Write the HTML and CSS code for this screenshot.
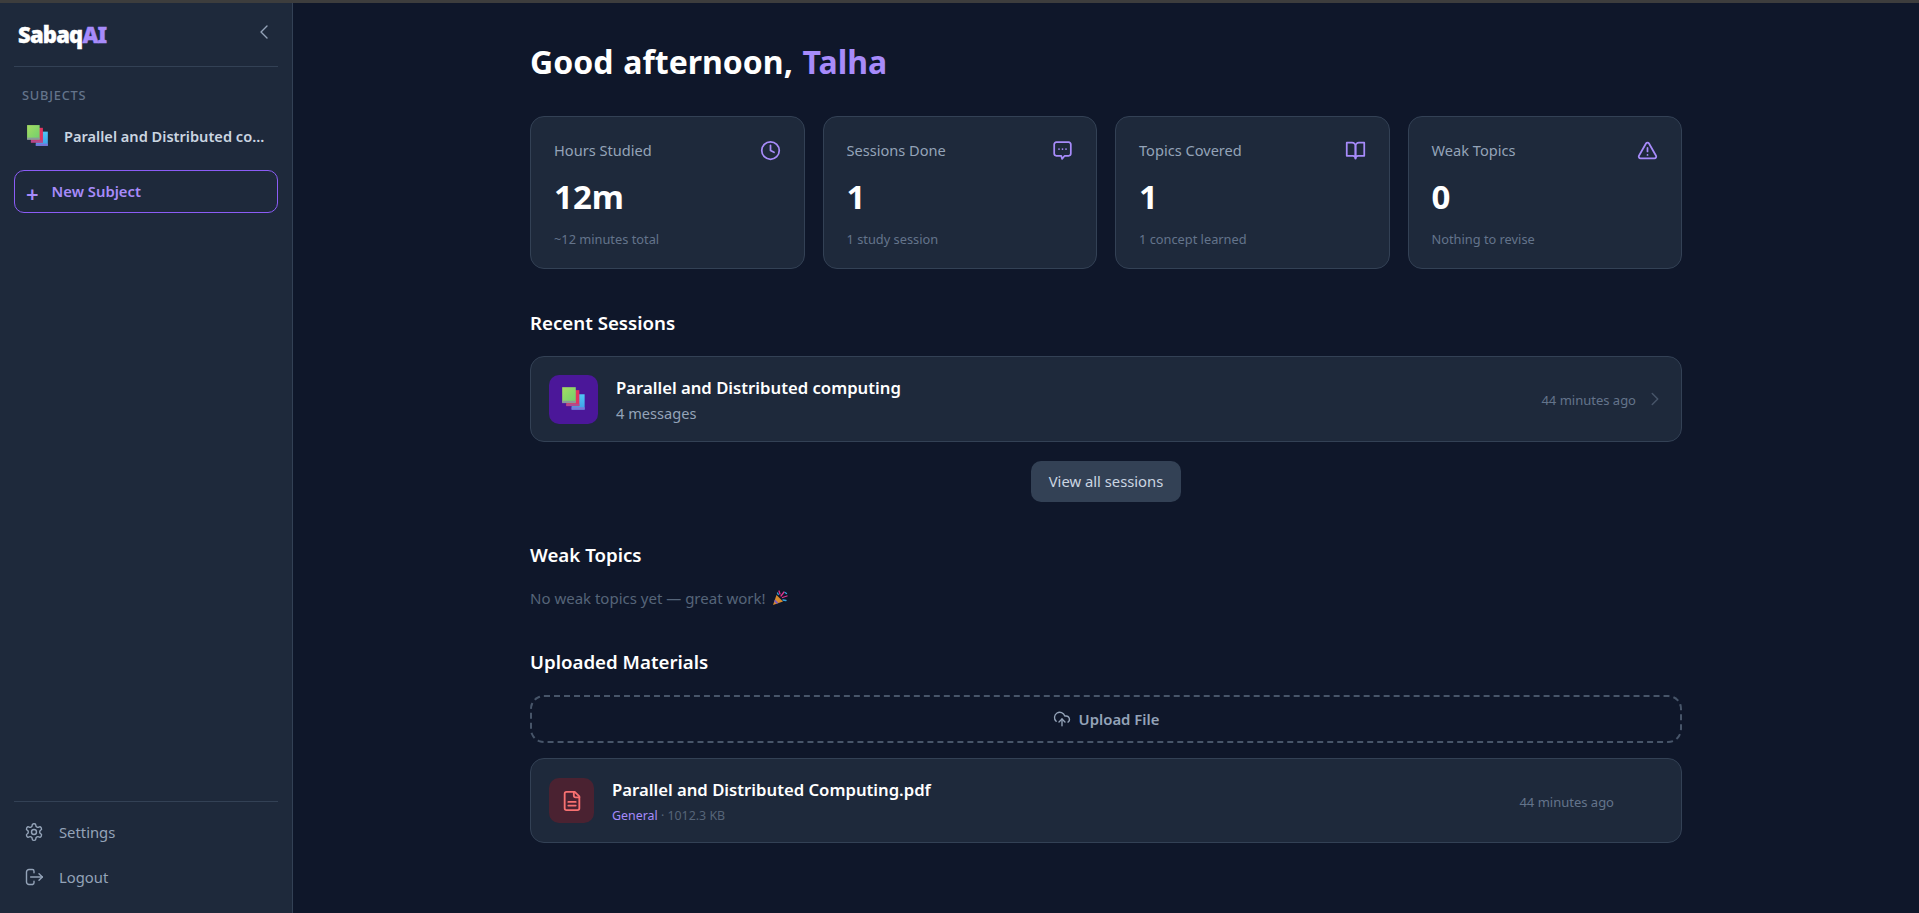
FILE: index.html
```html
<!DOCTYPE html>
<html lang="en">
<head>
    <meta charset="UTF-8">
    <meta name="viewport" content="width=device-width, initial-scale=1.0">
    <title>SabaqAI - Dashboard</title>
    <link rel="stylesheet" href="styles.css">
</head>
<body>
    <svg class="defs" width="0" height="0" aria-hidden="true">
        <defs>
            <linearGradient id="book-green" x1="0" y1="0" x2="1" y2="1">
                <stop offset="0" stop-color="#a6dc62"/>
                <stop offset="1" stop-color="#6fd06e"/>
            </linearGradient>
            <linearGradient id="book-blue" x1="0" y1="0" x2="0" y2="1">
                <stop offset="0" stop-color="#4fc6f5"/>
                <stop offset="1" stop-color="#3f9fe8"/>
            </linearGradient>
        </defs>
        <symbol id="books" viewBox="0 0 22 22">
            <rect x="9" y="7" width="11" height="13" fill="url(#book-blue)"/>
            <rect x="9" y="18" width="11" height="2" fill="#7a74d8"/>
            <rect x="4.5" y="3.5" width="11" height="13.5" fill="#e0345f"/>
            <rect x="4.5" y="15" width="11" height="2" fill="#b04a90"/>
            <rect x="1" y="1" width="11.5" height="13" fill="url(#book-green)"/>
            <rect x="1" y="12.5" width="11.5" height="2" fill="#8a9a9a"/>
        </symbol>
    </svg>

    <div class="topbar"></div>

    <div class="app">
        <aside class="sidebar">
            <div class="brand">
                <span class="logo">Sabaq<span class="accent">AI</span></span>
                <svg class="collapse" viewBox="0 0 24 24"><path d="m15 18-6-6 6-6"/></svg>
            </div>

            <div class="side-label">SUBJECTS</div>
            <div class="subject">
                <svg class="subject-icon"><use href="#books"/></svg>
                <span class="subject-name">Parallel and Distributed co...</span>
            </div>
            <div class="new-subject">
                <span class="plus">+</span>
                <span>New Subject</span>
            </div>

            <div class="side-bottom">
                <div class="side-link">
                    <svg class="side-icon" viewBox="0 0 24 24">
                        <path d="M12.22 2h-.44a2 2 0 0 0-2 2v.18a2 2 0 0 1-1 1.73l-.43.25a2 2 0 0 1-2 0l-.15-.08a2 2 0 0 0-2.73.73l-.22.38a2 2 0 0 0 .73 2.73l.15.1a2 2 0 0 1 1 1.72v.51a2 2 0 0 1-1 1.74l-.15.09a2 2 0 0 0-.73 2.73l.22.38a2 2 0 0 0 2.73.73l.15-.08a2 2 0 0 1 2 0l.43.25a2 2 0 0 1 1 1.73V20a2 2 0 0 0 2 2h.44a2 2 0 0 0 2-2v-.18a2 2 0 0 1 1-1.73l.43-.25a2 2 0 0 1 2 0l.15.08a2 2 0 0 0 2.73-.73l.22-.39a2 2 0 0 0-.73-2.73l-.15-.08a2 2 0 0 1-1-1.74v-.5a2 2 0 0 1 1-1.74l.15-.09a2 2 0 0 0 .73-2.73l-.22-.38a2 2 0 0 0-2.73-.73l-.15.08a2 2 0 0 1-2 0l-.43-.25a2 2 0 0 1-1-1.73V4a2 2 0 0 0-2-2z"/>
                        <circle cx="12" cy="12" r="3"/>
                    </svg>
                    <span>Settings</span>
                </div>
                <div class="side-link">
                    <svg class="side-icon" viewBox="0 0 24 24">
                        <path d="M10 21H6a3 3 0 0 1-3-3V6a3 3 0 0 1 3-3h4a2 2 0 0 1 2 2v2"/>
                        <path d="M12 17v2a2 2 0 0 1-2 2"/>
                        <path d="m18 16 4-4-4-4"/>
                        <path d="M22 12H8"/>
                    </svg>
                    <span>Logout</span>
                </div>
            </div>
        </aside>

        <main class="main">
            <div class="content">
                <h1 class="greeting">Good afternoon, <span class="accent">Talha</span></h1>

                <div class="stats">
                    <div class="stat-card">
                        <div class="stat-top">
                            <span class="stat-label">Hours Studied</span>
                            <svg class="stat-icon" viewBox="0 0 24 24"><circle cx="12" cy="12" r="10"/><path d="M12 6v6l4 2"/></svg>
                        </div>
                        <div class="stat-value">12m</div>
                        <div class="stat-sub">~12 minutes total</div>
                    </div>
                    <div class="stat-card">
                        <div class="stat-top">
                            <span class="stat-label">Sessions Done</span>
                            <svg class="stat-icon" viewBox="0 0 24 24"><path d="M5 2.5h14A2.5 2.5 0 0 1 21.5 5v10.5a2.5 2.5 0 0 1-2.5 2.5h-4.500l-3 3.500-1-3.500H5a2.5 2.5 0 0 1-2.5-2.500V5A2.5 2.5 0 0 1 5 2.5z"/><path d="M8 10.3h.01M12 10.3h.01M16 10.3h.01"/></svg>
                        </div>
                        <div class="stat-value">1</div>
                        <div class="stat-sub">1 study session</div>
                    </div>
                    <div class="stat-card">
                        <div class="stat-top">
                            <span class="stat-label">Topics Covered</span>
                            <svg class="stat-icon" viewBox="0 0 24 24"><path d="M2 3h6a4 4 0 0 1 4 4v14a3 3 0 0 0-3-3H2z"/><path d="M22 3h-6a4 4 0 0 0-4 4v14a3 3 0 0 1 3-3h7z"/></svg>
                        </div>
                        <div class="stat-value">1</div>
                        <div class="stat-sub">1 concept learned</div>
                    </div>
                    <div class="stat-card">
                        <div class="stat-top">
                            <span class="stat-label">Weak Topics</span>
                            <svg class="stat-icon" viewBox="0 0 24 24"><path d="m21.73 18-8-14a2 2 0 0 0-3.48 0l-8 14A2 2 0 0 0 4 21h16a2 2 0 0 0 1.73-3"/><path d="M12 9v4"/><path d="M12 17h.01"/></svg>
                        </div>
                        <div class="stat-value">0</div>
                        <div class="stat-sub">Nothing to revise</div>
                    </div>
                </div>

                <h2 class="section-title first">Recent Sessions</h2>
                <div class="row-card session">
                    <div class="session-icon"><svg class="session-books"><use href="#books"/></svg></div>
                    <div class="row-text">
                        <div class="row-title">Parallel and Distributed computing</div>
                        <div class="session-count">4 messages</div>
                    </div>
                    <span class="row-time">44 minutes ago</span>
                    <svg class="row-chevron" viewBox="0 0 24 24"><path d="m9 18 6-6-6-6"/></svg>
                </div>
                <div class="view-all-wrap">
                    <div class="view-all">View all sessions</div>
                </div>

                <h2 class="section-title">Weak Topics</h2>
                <p class="empty">No weak topics yet — great work!
                    <svg class="party" viewBox="0 0 16 16">
                        <path d="M1 15 4.5 5l6.5 6.5z" fill="#d98a2b"/>
                        <path d="M3 9.5 6.5 13l-2 .8-2.3-2.2z" fill="#7a5bc0"/>
                        <path d="M7 1l1 3M10.5 7.5 15 6M9 6l3-4" stroke="#e0348f" stroke-width="1.3" fill="none"/>
                        <path d="M5.5 3l.8 1.5M11 10l3 .5M13 2.5l1.5 1" stroke="#37a6e0" stroke-width="1.3" fill="none"/>
                    </svg>
                </p>

                <h2 class="section-title">Uploaded Materials</h2>
                <div class="upload">
                    <svg class="upload-icon" viewBox="0 0 24 24"><path d="M4.2 15.1A7 7 0 1 1 15.71 8h1.79a4.5 4.5 0 0 1 2.5 8.2"/><path d="M12 12v9"/><path d="m16 16-4-4-4 4"/></svg>
                    <span>Upload File</span>
                </div>
                <div class="row-card file">
                    <div class="file-icon">
                        <svg viewBox="0 0 24 24"><path d="M15 2H6a2 2 0 0 0-2 2v16a2 2 0 0 0 2 2h12a2 2 0 0 0 2-2V7Z"/><path d="M14 2v4a2 2 0 0 0 2 2h4"/><path d="M16 13H8"/><path d="M16 17H8"/></svg>
                    </div>
                    <div class="row-text">
                        <div class="row-title">Parallel and Distributed Computing.pdf</div>
                        <div class="file-meta"><span class="file-tag">General</span> · 1012.3 KB</div>
                    </div>
                    <span class="row-time file-time">44 minutes ago</span>
                </div>
            </div>
        </main>
    </div>
</body>
</html>
```

FILE: styles.css
```css
* {
    margin: 0;
    padding: 0;
    box-sizing: border-box;
}

body {
    font-family: 'Noto Sans', 'Open Sans', sans-serif;
    background: #0f172a;
    color: #f1f5f9;
    height: 100vh;
    overflow: hidden;
}

svg {
    fill: none;
    stroke: currentColor;
    stroke-width: 2;
    stroke-linecap: round;
    stroke-linejoin: round;
    flex-shrink: 0;
}

.defs {
    position: absolute;
}

.topbar {
    height: 3px;
    background: #3d3d3d;
}

.app {
    display: flex;
    height: calc(100vh - 3px);
}

.accent {
    color: #a78bfa;
}

/* sidebar */
.sidebar {
    width: 293px;
    flex-shrink: 0;
    background: #1e293b;
    border-right: 1px solid #334155;
    padding: 0 14px;
    display: flex;
    flex-direction: column;
}

.brand {
    height: 64px;
    border-bottom: 1px solid #334155;
    display: flex;
    align-items: center;
    justify-content: space-between;
    padding: 0 2px 0 4px;
    flex-shrink: 0;
}

.logo {
    font-size: 22px;
    font-weight: 900;
    color: #fff;
    letter-spacing: -0.8px;
    -webkit-text-stroke: 0.4px currentColor;
    margin-bottom: 2px;
}

.logo .accent {
    color: #a78bfa;
}

.collapse {
    width: 24px;
    height: 24px;
    color: #94a3b8;
    stroke-width: 1.4;
    margin-bottom: 5px;
}

.side-label {
    font-size: 12.8px;
    font-weight: 500;
    color: #64748b;
    letter-spacing: 0.8px;
    line-height: 16px;
    margin: 20px 0 0 8px;
}

.subject {
    display: flex;
    align-items: center;
    height: 42px;
    margin-top: 12px;
    padding-left: 12px;
    gap: 14px;
}

.subject-icon {
    width: 24px;
    height: 24px;
    stroke: none;
}

.subject-name {
    font-size: 14.6px;
    font-weight: 600;
    color: #cbd5e1;
    white-space: nowrap;
}

.new-subject {
    display: flex;
    align-items: center;
    height: 43px;
    margin-top: 13px;
    padding: 0 0 2px 11px;
    gap: 13px;
    border: 1px solid #8b5cf6;
    border-radius: 10px;
    font-size: 14.8px;
    font-weight: 600;
    color: #a78bfa;
}

.plus {
    font-size: 22px;
    line-height: 18px;
    margin-top: 5px;
}

.side-bottom {
    margin-top: auto;
    border-top: 1px solid #334155;
    padding: 7px 0 14px;
}

.side-link {
    display: flex;
    align-items: center;
    height: 45px;
    padding-left: 10px;
    gap: 15px;
    font-size: 14.8px;
    color: #94a3b8;
}

.side-icon {
    width: 20px;
    height: 20px;
    color: #94a3b8;
    stroke-width: 1.7;
}

/* main column */
.main {
    flex: 1;
    min-width: 0;
    padding: 39px 20px 0;
}

.content {
    width: 1152px;
    margin: 0 auto;
}

.greeting {
    font-size: 32px;
    line-height: 40px;
    font-weight: 700;
    word-spacing: 1.5px;
    color: #fff;
    margin-bottom: 34px;
}

.stats {
    display: grid;
    grid-template-columns: repeat(4, 1fr);
    gap: 18px;
}

.stat-card {
    background: #1e293b;
    border: 1px solid #334155;
    border-radius: 14px;
    height: 153px;
    padding: 21px 23px 0 23px;
}

.stat-top {
    display: flex;
    align-items: center;
    justify-content: space-between;
    height: 24px;
}

.stat-label {
    font-size: 14.6px;
    color: #94a3b8;
}

.stat-icon {
    width: 21px;
    height: 21px;
    color: #a78bfa;
}

.stat-value {
    font-size: 33px;
    font-weight: 700;
    line-height: 44px;
    color: #fff;
    margin-top: 13px;
}

.stat-sub {
    font-size: 12.8px;
    line-height: 18px;
    color: #64748b;
    margin-top: 11px;
}

.section-title {
    font-size: 18.7px;
    font-weight: 600;
    line-height: 24px;
    color: #fff;
    margin-top: 41px;
    margin-bottom: 21px;
}

.section-title.first {
    margin-top: 42px;
}

.row-card {
    display: flex;
    align-items: center;
    background: #1e293b;
    border: 1px solid #334155;
    border-radius: 14px;
}

.session {
    height: 86px;
    padding: 0 15px 0 18px;
    gap: 18px;
}

.session-icon {
    width: 49px;
    height: 49px;
    border-radius: 10px;
    background: #4b1799;
    display: flex;
    align-items: center;
    justify-content: center;
}

.session-books {
    width: 26px;
    height: 26px;
    stroke: none;
}

.row-text {
    flex: 1;
    min-width: 0;
    padding-top: 2px;
}

.row-title {
    font-size: 16.7px;
    font-weight: 600;
    line-height: 22px;
    color: #fff;
}

.session-count {
    font-size: 14.6px;
    line-height: 20px;
    color: #94a3b8;
    margin-top: 4px;
}

.row-time {
    font-size: 13px;
    color: #64748b;
    margin-top: 2px;
}

.row-chevron {
    width: 22px;
    height: 22px;
    color: #475569;
    stroke-width: 1.6;
    margin-left: -10px;
}

.view-all-wrap {
    display: flex;
    justify-content: center;
    margin-top: 19px;
}

.view-all {
    width: 150px;
    height: 41px;
    padding-bottom: 1px;
    border-radius: 10px;
    background: #334155;
    color: #cbd5e1;
    font-size: 14.8px;
    display: flex;
    align-items: center;
    justify-content: center;
}

.empty {
    font-size: 15px;
    line-height: 22px;
    color: #566579;
    display: flex;
    align-items: center;
    gap: 6px;
    margin-top: -1px;
}

.party {
    width: 16px;
    height: 16px;
    stroke: none;
}

.upload {
    height: 48px;
    border: 2px dashed #475569;
    border-radius: 14px;
    display: flex;
    align-items: center;
    justify-content: center;
    gap: 8px;
    font-size: 14.9px;
    font-weight: 600;
    color: #94a3b8;
}

.upload-icon {
    width: 18px;
    height: 18px;
    stroke-width: 1.8;
}

.file {
    height: 85px;
    margin-top: 15px;
    padding: 0 67px 0 18px;
    gap: 18px;
}

.file-icon {
    width: 45px;
    height: 45px;
    border-radius: 10px;
    background: #4a2231;
    color: #f87171;
    display: flex;
    align-items: center;
    justify-content: center;
}

.file-icon svg {
    width: 22px;
    height: 22px;
}

.file-meta {
    font-size: 12.4px;
    line-height: 16px;
    color: #566579;
    margin-top: 7px;
}

.file-tag {
    color: #a78bfa;
}
```
